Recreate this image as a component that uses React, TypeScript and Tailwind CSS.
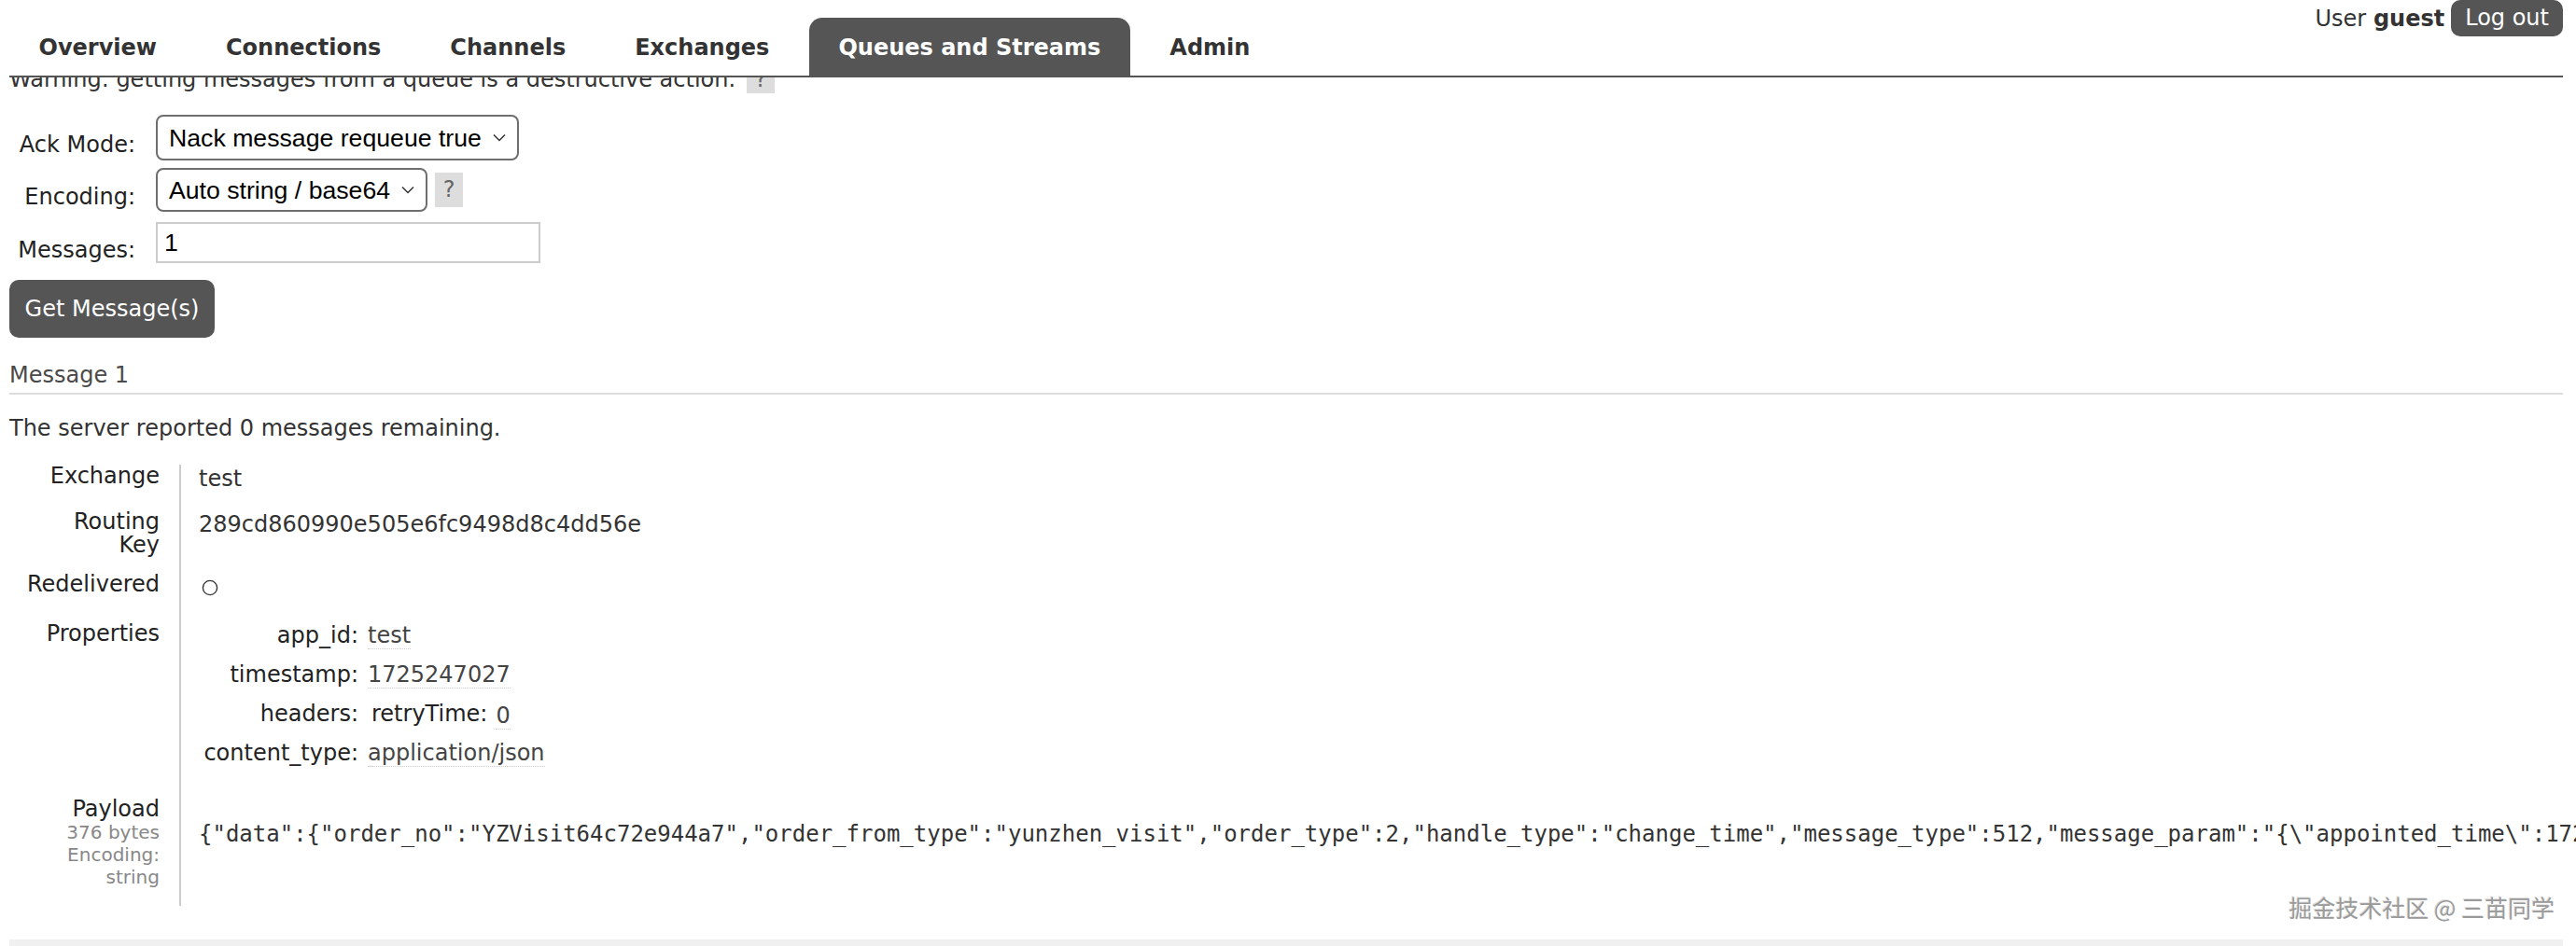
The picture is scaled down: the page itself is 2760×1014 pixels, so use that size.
import type { ReactNode } from "react";

const TABS = ["Overview", "Connections", "Channels", "Exchanges", "Queues and Streams", "Admin"];
const ACTIVE = "Queues and Streams";

const PAYLOAD =
  '{"data":{"order_no":"YZVisit64c72e944a7","order_from_type":"yunzhen_visit","order_type":2,"handle_type":"change_time","message_type":512,"message_param":"{\\"appointed_time\\":1725336000,\\"doctor_id\\":10086}"},"app_id":"test"}';

function Chevron() {
  return (
    <svg width="14" height="9" viewBox="0 0 14 9" className="shrink-0">
      <polyline points="1,1.5 7,7.5 13,1.5" fill="none" stroke="#333" strokeWidth="1.5" />
    </svg>
  );
}

function FakeSelect({ value, width, height }: { value: string; width: string; height: string }) {
  return (
    <div
      className={`flex items-center justify-between rounded-[8px] border-2 border-[#6e6e6e] pl-[12px] pr-[12px] font-['Liberation_Sans',Arial,sans-serif] text-[26.67px] leading-[30px] text-black ${width} ${height}`}
    >
      <span>{value}</span>
      <Chevron />
    </div>
  );
}

function HelpBox() {
  return (
    <span className="flex h-[37px] w-[30px] items-center justify-center bg-[#ddd] text-[#666]">?</span>
  );
}

function FactRow({
  label,
  children,
  height,
  valueTop,
}: {
  label: ReactNode;
  children: ReactNode;
  height: string;
  valueTop: string;
}) {
  return (
    <div className={`flex ${height}`}>
      <div className="w-[182px] shrink-0 pr-[21px] text-right leading-[25px] text-[#222]">{label}</div>
      <div className={`min-w-0 flex-1 border-l-2 border-[#ccc] pl-[19px] ${valueTop}`}>{children}</div>
    </div>
  );
}

function Prop({ name, children }: { name: string; children: ReactNode }) {
  return (
    <div className="flex h-[42px] items-center">
      <div className="w-[171px] shrink-0 text-right text-[#222]">{name}:</div>
      <div className="ml-[10px]">{children}</div>
    </div>
  );
}

function Dotted({ children }: { children: ReactNode }) {
  return <span className="border-b border-dotted border-[#ccc] text-[#444]">{children}</span>;
}

export default function App() {
  return (
    <div className="relative h-[1014px] overflow-hidden bg-white pl-[10px] pr-[14px] font-['DejaVu_Sans',Verdana,sans-serif] text-[24px] leading-[29px] text-[#333]">
      {/* header */}
      <div className="flex h-[83px] items-start justify-between border-b-2 border-[#555]">
        <nav className="mt-[19px] flex gap-[11px]">
          {TABS.map((t) => (
            <div
              key={t}
              className={`flex h-[62px] items-center px-[31.5px] pt-[2px] font-bold ${
                t === ACTIVE ? "rounded-t-[14px] bg-[#555] text-white" : "text-[#333]"
              }`}
            >
              {t}
            </div>
          ))}
        </nav>
        <div className="flex items-start gap-[7px]">
          <span className="mt-[6px] text-[#333]">
            User <b>guest</b>
          </span>
          <span className="flex h-[39px] items-center rounded-[10px] bg-[#555] px-[15px] text-white">Log out</span>
        </div>
      </div>

      {/* warning, half hidden under the header */}
      <div className="h-[17px] overflow-hidden">
        <p className="-mt-[16px] flex items-center gap-[12px] text-[#333]">
          Warning: getting messages from a queue is a destructive action.
          <HelpBox />
        </p>
      </div>

      {/* get messages form */}
      <div className="mt-[23px] flex flex-col">
        <div className="flex">
          <label className="w-[135px] pt-[18px] text-right text-[#222]">Ack Mode:</label>
          <div className="ml-[22px]">
            <FakeSelect value="Nack message requeue true" width="w-[389px]" height="h-[49px]" />
          </div>
        </div>
        <div className="mt-[8px] flex">
          <label className="w-[135px] pt-[17px] text-right text-[#222]">Encoding:</label>
          <div className="ml-[22px] flex items-center gap-[8px]">
            <FakeSelect value="Auto string / base64" width="w-[291px]" height="h-[47px]" />
            <HelpBox />
          </div>
        </div>
        <div className="mt-[11px] flex">
          <label className="w-[135px] pt-[16px] text-right text-[#222]">Messages:</label>
          <div className="ml-[22px] flex h-[44px] w-[412px] items-center border-2 border-[#ccc] pl-[7px] font-['Liberation_Sans',Arial,sans-serif] text-[26.67px] text-black">
            1
          </div>
        </div>
        <button className="mt-[17px] h-[62px] w-[220px] rounded-[10px] bg-[#555] text-white">Get Message(s)</button>
      </div>

      {/* result */}
      <h3 className="mt-[26px] border-b-2 border-[#ddd] pb-[4px] text-[#4a4a4a]">Message 1</h3>
      <p className="mt-[22px] text-[#333]">The server reported 0 messages remaining.</p>

      <div className="mt-[24px] flex flex-col">
        <FactRow label="Exchange" height="h-[41px]" valueTop="pt-[1px]">
          test
        </FactRow>
        <FactRow
          label={
            <div className="pt-[8px]">
              Routing
              <br />
              Key
            </div>
          }
          height="h-[67px]"
          valueTop="pt-[9px]"
        >
          289cd860990e505e6fc9498d8c4dd56e
        </FactRow>
        <FactRow label={<div className="pt-[8px]">Redelivered</div>} height="h-[53px]" valueTop="pt-[15px]">
          <svg width="18" height="18" viewBox="0 0 18 18" className="ml-[3px] block">
            <circle cx="9" cy="9" r="7.6" fill="none" stroke="#333" strokeWidth="1.4" />
          </svg>
        </FactRow>
        <FactRow label={<div className="pt-[8px]">Properties</div>} height="h-[188px]" valueTop="pt-[1px]">
          <Prop name="app_id">
            <Dotted>test</Dotted>
          </Prop>
          <Prop name="timestamp">
            <Dotted>1725247027</Dotted>
          </Prop>
          <Prop name="headers">
            <div className="ml-[4px] flex items-center gap-[9px]">
              <span className="text-[#222]">retryTime:</span>
              <span className="mt-[4px]">
                <Dotted>0</Dotted>
              </span>
            </div>
          </Prop>
          <Prop name="content_type">
            <Dotted>application/json</Dotted>
          </Prop>
        </FactRow>
        <FactRow
          label={
            <div className="pt-[8px]">
              Payload
              <div className="text-[20px] leading-[24px] text-[#888]">
                376 bytes
                <br />
                Encoding:
                <br />
                string
              </div>
            </div>
          }
          height="h-[124px]"
          valueTop="pt-[33px]"
        >
          <div className="whitespace-nowrap font-['DejaVu_Sans_Mono',Menlo,monospace] text-[24px] text-[#333]">
            {PAYLOAD}
          </div>
        </FactRow>
      </div>

      <div className="mt-[36px] h-[40px] bg-[#f0f0f0]" />

      <div className="absolute right-[23px] top-[955px] font-['Noto_Sans_CJK_SC','Noto_Sans',sans-serif] text-[25px] leading-[34px] text-[#9a9a9a] [text-shadow:1px_1px_0_#ffffff,-1px_-1px_0_#e0e0e0]">
        掘金技术社区 @ 三苗同学
      </div>
    </div>
  );
}
